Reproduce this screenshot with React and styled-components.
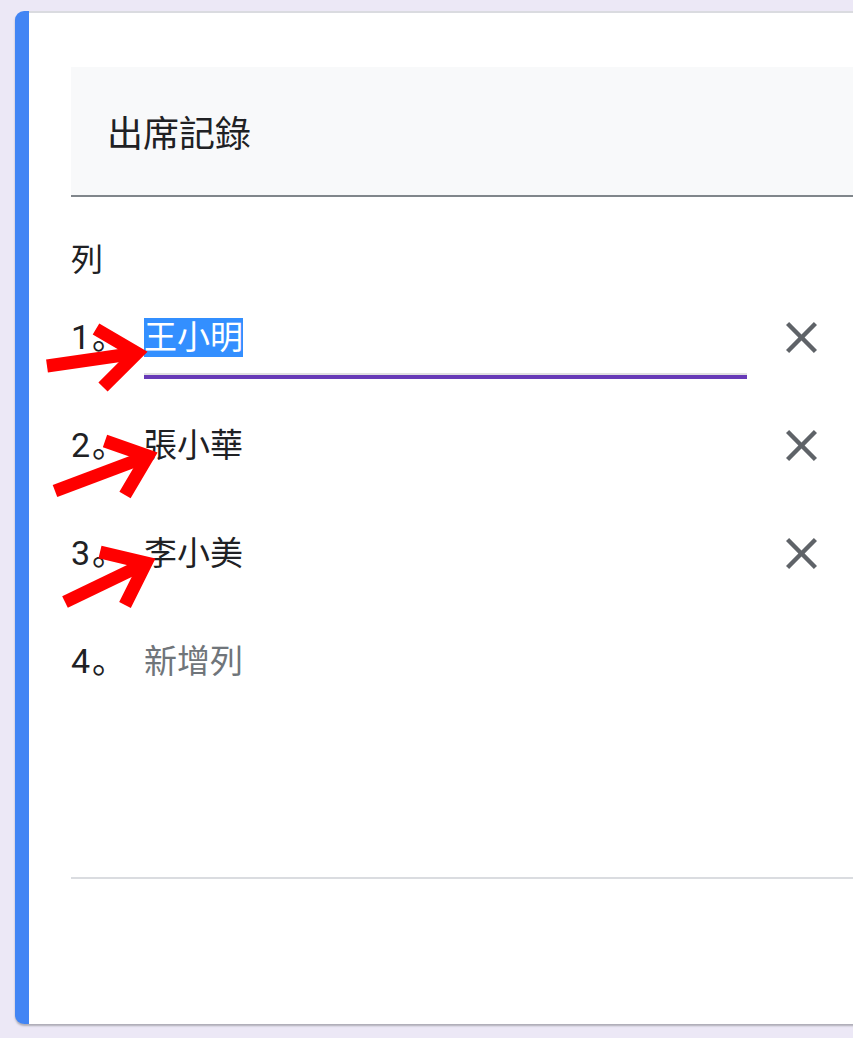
import React from "react";
import styled, { createGlobalStyle } from "styled-components";

const GlobalStyle = createGlobalStyle`
  html, body {
    margin: 0;
    padding: 0;
    background: #ece8f6;
    overflow: hidden;
  }
  body {
    font-family: Roboto, "Noto Sans CJK TC", "Noto Sans", sans-serif;
    color: #202124;
  }
`;

const Page = styled.div`
  position: relative;
  width: 853px;
  height: 1038px;
  padding: 11px 0 0 15px;
  box-sizing: border-box;
`;

const Card = styled.div`
  width: 900px;
  box-sizing: border-box;
  background: #fff;
  border-left: 14px solid #4285f4;
  border-radius: 9px;
  box-shadow: inset 0 2px 0 #dadbe0, 0 2px 2px rgba(60, 64, 67, 0.35);
  padding: 56px 0 145px 42px;
`;

const Header = styled.div`
  height: 128px;
  display: flex;
  align-items: center;
  padding-left: 36px;
  background: #f8f9fa;
  border-bottom: 2px solid #80868b;
`;

const Title = styled.h1`
  margin: 0;
  font-size: 36px;
  font-weight: 400;
  color: #202124;
`;

const Label = styled.div`
  margin-top: 43px;
  height: 40px;
  line-height: 40px;
  font-size: 32px;
`;

const List = styled.div`
  margin-top: 3px;
  display: flex;
  flex-direction: column;
`;

const Row = styled.div`
  height: 108px;
  display: flex;
  align-items: center;
`;

const Num = styled.div`
  width: 73px;
  flex: none;
  font-family: Roboto, "Noto Sans CJK SC", sans-serif;
  font-size: 34px;
  letter-spacing: 2px;
  line-height: 45px;
  color: #202124;
`;

const Field = styled.div`
  width: 603px;
  flex: none;
  padding-top: 19px;
  display: flex;
  flex-direction: column;
`;

const Text = styled.div`
  font-size: 33px;
  line-height: 45px;
  height: 45px;
  color: ${({ $placeholder }) => ($placeholder ? "#70757a" : "#202124")};
`;

const Selected = styled.span`
  background: #338fff;
  color: #fff;
`;

const Underline = styled.div`
  margin-top: 13px;
  height: 2px;
  background: ${({ $active }) => ($active ? "#e0e0e0" : "transparent")};
  border-bottom: 4px solid ${({ $active }) => ($active ? "#673ab7" : "transparent")};
`;

const RemoveButton = styled.button`
  margin-left: 24px;
  width: 60px;
  height: 60px;
  border: none;
  background: none;
  padding: 0;
  display: flex;
  align-items: center;
  justify-content: center;
  color: #5f6368;
`;

const Divider = styled.div`
  margin-top: 162px;
  height: 2px;
  background: #dadce0;
`;

const Annotations = styled.svg`
  position: absolute;
  top: 0;
  left: 0;
  pointer-events: none;
`;

const CloseIcon = () => (
  <svg width="31" height="31" viewBox="5 5 14 14" fill="currentColor">
    <path d="M19 6.41L17.59 5 12 10.59 6.41 5 5 6.41 10.59 12 5 17.59 6.41 19 12 13.41 17.59 19 19 17.59 13.41 12z" />
  </svg>
);

const rows = [
  { n: "1。", text: "王小明", active: true },
  { n: "2。", text: "張小華" },
  { n: "3。", text: "李小美" },
];

// red arrows drawn over the screenshot
const arrows = [
  { shaft: [47, 366, 137, 353], head: [96, 329, 137, 353, 103, 387] },
  { shaft: [55, 491, 148, 456], head: [105, 441, 148, 456, 125, 495] },
  { shaft: [65, 602, 146, 563], head: [100, 552, 146, 563, 125, 605] },
];

export default function App() {
  return (
    <Page>
      <GlobalStyle />
      <Card>
        <Header>
          <Title>出席記錄</Title>
        </Header>
        <Label>列</Label>
        <List>
          {rows.map((r) => (
            <Row key={r.n}>
              <Num>{r.n}</Num>
              <Field>
                <Text>{r.active ? <Selected>{r.text}</Selected> : r.text}</Text>
                <Underline $active={r.active} />
              </Field>
              <RemoveButton>
                <CloseIcon />
              </RemoveButton>
            </Row>
          ))}
          <Row>
            <Num>4。</Num>
            <Field>
              <Text $placeholder>新增列</Text>
              <Underline />
            </Field>
          </Row>
        </List>
        <Divider />
      </Card>
      <Annotations width="853" height="1038">
        {arrows.map((a, i) => (
          <g key={i} stroke="#ff0000" strokeWidth="13" fill="none" strokeLinejoin="miter" strokeLinecap="butt">
            <line x1={a.shaft[0]} y1={a.shaft[1]} x2={a.shaft[2]} y2={a.shaft[3]} />
            <polyline points={a.head.join(" ")} />
          </g>
        ))}
      </Annotations>
    </Page>
  );
}
